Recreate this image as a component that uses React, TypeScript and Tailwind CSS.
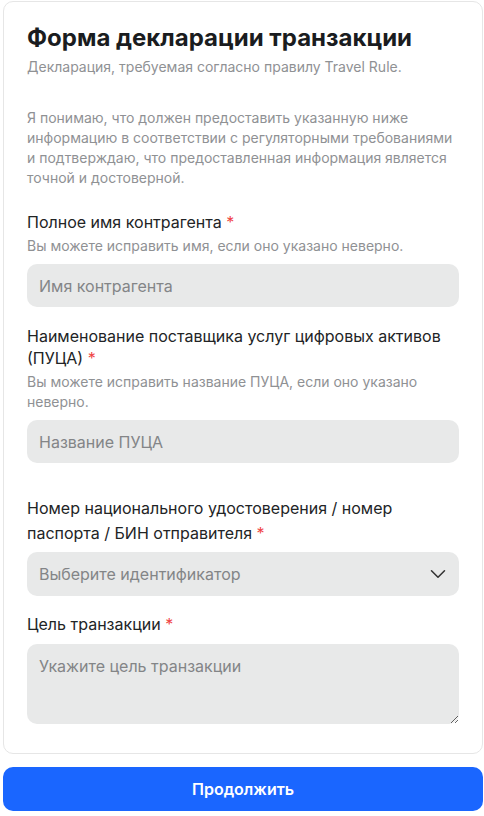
import { ChevronDown } from 'lucide-react';

const font = { fontFamily: 'Inter, "Noto Sans", sans-serif' };

function Label({ children }: { children: React.ReactNode }) {
  return (
    <p className="text-[16px] leading-[22px] text-[#222426]">
      {children} <span className="text-[#ef4444]">*</span>
    </p>
  );
}

function Hint({ children }: { children: React.ReactNode }) {
  return <p className="mt-[3px] text-[14px] leading-[20px] text-[#8f9194]">{children}</p>;
}

const fieldCls =
  'w-full rounded-[10px] bg-[#e8e9e9] px-3 text-[16px] text-[#222426] placeholder:text-[#838587] outline-none';

export default function App() {
  return (
    <div className="min-h-screen bg-white pl-[3px] pr-px pt-px" style={font}>
      {/* Карточка формы */}
      <div className="rounded-[10px] border border-[#e6e6e6] px-[23px] pt-5 pb-[29px]">
        <h1 className="text-[24px] leading-[32px] font-bold text-[#1a1c20]">
          Форма декларации транзакции
        </h1>
        <p className="mt-[3px] text-[14px] leading-[20px] text-[#8f9194]">
          Декларация, требуемая согласно правилу Travel Rule.
        </p>

        <p className="mt-[31px] text-[14px] leading-[20px] text-[#8f9194]">
          Я понимаю, что должен предоставить указанную ниже информацию в соответствии с регуляторными
          требованиями и подтверждаю, что предоставленная информация является точной и достоверной.
        </p>

        <div className="mt-[23px]">
          <Label>Полное имя контрагента</Label>
          <Hint>Вы можете исправить имя, если оно указано неверно.</Hint>
          <input className={`${fieldCls} mt-2 h-[43px]`} placeholder="Имя контрагента" />
        </div>

        <div className="mt-[18px]">
          <Label>Наименование поставщика услуг цифровых активов (ПУЦА)</Label>
          <Hint>Вы можете исправить название ПУЦА, если оно указано неверно.</Hint>
          <input className={`${fieldCls} mt-2 h-[43px]`} placeholder="Название ПУЦА" />
        </div>

        <div className="mt-[33px]">
          <p className="text-[16px] leading-[25px] text-[#222426]">
            Номер национального удостоверения / номер паспорта / БИН отправителя{' '}
            <span className="text-[#ef4444]">*</span>
          </p>
          <button
            type="button"
            className="mt-[6px] flex h-[44px] w-full items-center justify-between rounded-[10px] bg-[#e8e9e9] pl-3 pr-2 text-[16px] text-[#838587]"
          >
            <span>Выберите идентификатор</span>
            <ChevronDown className="h-[26px] w-[26px] text-[#333]" strokeWidth={1.4} />
          </button>
        </div>

        <div className="mt-4">
          <p className="text-[16px] leading-[24px] text-[#222426]">
            Цель транзакции <span className="text-[#ef4444]">*</span>
          </p>
          <textarea
            className={`${fieldCls} mt-2 block h-[80px] py-[10px] leading-[24px]`}
            placeholder="Укажите цель транзакции"
          />
        </div>
      </div>

      <button
        type="button"
        className="mt-[13px] h-[44px] w-full rounded-[10px] bg-[#1a66ff] text-[16px] font-semibold text-white"
      >
        Продолжить
      </button>
    </div>
  );
}
